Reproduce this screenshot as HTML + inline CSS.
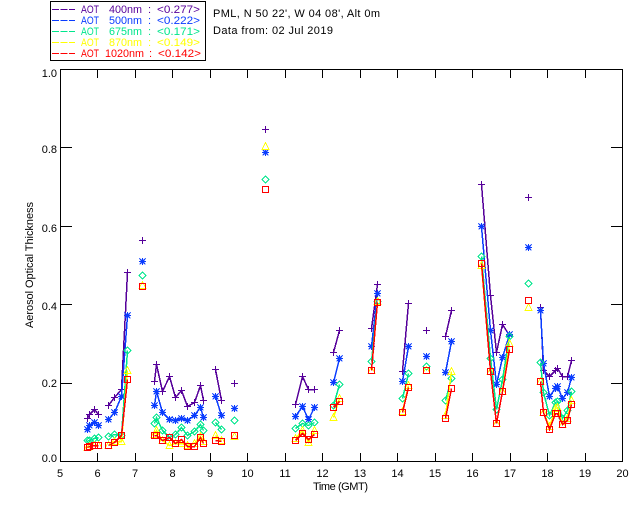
<!DOCTYPE html>
<html><head><meta charset="utf-8"><style>
html,body{margin:0;padding:0;background:#fff;width:640px;height:512px;overflow:hidden}
svg{display:block}
text{font-family:"Liberation Sans",sans-serif;font-size:11px;fill:#000}
.ax{stroke:#000;stroke-width:1.4;fill:none;shape-rendering:crispEdges}
.d polyline{fill:none;stroke-width:1.5;shape-rendering:crispEdges}
.m{fill:none;stroke-width:1;shape-rendering:crispEdges}
.pu polyline{stroke:#56009a;marker:url(#mp)}
.bl polyline{stroke:#0a3cff;marker:url(#mb)}
.gr polyline{stroke:#00e68c;marker:url(#mg)}
.ye polyline{stroke:#ffff00;marker:url(#my)}
.re polyline{stroke:#ff0000;marker:url(#mr)}
</style></head><body>
<svg width="640" height="512" viewBox="0 0 640 512" xmlns="http://www.w3.org/2000/svg">
<defs>
<marker id="mp" markerUnits="userSpaceOnUse" markerWidth="12" markerHeight="12" refX="6" refY="6" overflow="visible"><path class="m" transform="translate(6,6)" stroke="#56009a" d="M-3.5 0H3.5M0-3.5V3.5"/></marker>
<marker id="mb" markerUnits="userSpaceOnUse" markerWidth="12" markerHeight="12" refX="6" refY="6" overflow="visible"><path class="m" transform="translate(6,6)" stroke="#0a3cff" d="M-3.5 0H3.5M0-3.5V3.5M-3-3L3 3M-3 3L3-3M-1.5-1.5H1.5V1.5H-1.5Z"/></marker>
<marker id="mg" markerUnits="userSpaceOnUse" markerWidth="12" markerHeight="12" refX="6" refY="6" overflow="visible"><path class="m" transform="translate(6,6)" stroke="#00e68c" d="M0-3.5L3.5 0L0 3.5L-3.5 0Z"/></marker>
<marker id="my" markerUnits="userSpaceOnUse" markerWidth="12" markerHeight="12" refX="6" refY="6" overflow="visible"><path class="m" transform="translate(6,6)" stroke="#ffff00" d="M0-4L3.5 3H-3.5Z"/></marker>
<marker id="mr" markerUnits="userSpaceOnUse" markerWidth="12" markerHeight="12" refX="6" refY="6" overflow="visible"><path class="m" transform="translate(6,6)" stroke="#ff0000" d="M-3-3H3V3H-3Z"/></marker>
</defs>

<rect x="50.5" y="1.5" width="155" height="59" fill="none" stroke="#000" stroke-width="1" shape-rendering="crispEdges"/>
<g stroke-width="1" shape-rendering="crispEdges" stroke-dasharray="7 1.5">
<path stroke="#56009a" d="M52 9.5H75"/><path stroke="#0a3cff" d="M52 20.5H75"/><path stroke="#00e68c" d="M52 31.5H75"/><path stroke="#ffff00" d="M52 42.5H75"/><path stroke="#ff0000" d="M52 53.5H75"/>
</g>
<g>
<g><text x="81" y="13" style="fill:#56009a" textLength="18" lengthAdjust="spacingAndGlyphs">AOT</text><text x="109" y="13" style="fill:#56009a" textLength="33" lengthAdjust="spacingAndGlyphs">400nm</text><text x="148" y="13" style="fill:#56009a">:</text><text x="157" y="13" style="fill:#56009a" textLength="43" lengthAdjust="spacingAndGlyphs">&lt;0.277&gt;</text></g>
<g><text x="81" y="24" style="fill:#0a3cff" textLength="18" lengthAdjust="spacingAndGlyphs">AOT</text><text x="109" y="24" style="fill:#0a3cff" textLength="33" lengthAdjust="spacingAndGlyphs">500nm</text><text x="148" y="24" style="fill:#0a3cff">:</text><text x="157" y="24" style="fill:#0a3cff" textLength="43" lengthAdjust="spacingAndGlyphs">&lt;0.222&gt;</text></g>
<g><text x="81" y="35" style="fill:#00e68c" textLength="18" lengthAdjust="spacingAndGlyphs">AOT</text><text x="109" y="35" style="fill:#00e68c" textLength="33" lengthAdjust="spacingAndGlyphs">675nm</text><text x="148" y="35" style="fill:#00e68c">:</text><text x="157" y="35" style="fill:#00e68c" textLength="43" lengthAdjust="spacingAndGlyphs">&lt;0.171&gt;</text></g>
<g><text x="81" y="46" style="fill:#ffff00" textLength="18" lengthAdjust="spacingAndGlyphs">AOT</text><text x="109" y="46" style="fill:#ffff00" textLength="33" lengthAdjust="spacingAndGlyphs">870nm</text><text x="148" y="46" style="fill:#ffff00">:</text><text x="157" y="46" style="fill:#ffff00" textLength="43" lengthAdjust="spacingAndGlyphs">&lt;0.149&gt;</text></g>
<g><text x="81" y="57" style="fill:#ff0000" textLength="18" lengthAdjust="spacingAndGlyphs">AOT</text><text x="105" y="57" style="fill:#ff0000" textLength="39" lengthAdjust="spacingAndGlyphs">1020nm</text><text x="149" y="57" style="fill:#ff0000">:</text><text x="158" y="57" style="fill:#ff0000" textLength="43" lengthAdjust="spacingAndGlyphs">&lt;0.142&gt;</text></g>
</g>
<text x="213" y="17" textLength="167" lengthAdjust="spacing">PML, N 50 22', W 04 08', Alt 0m</text>
<text x="213" y="34" textLength="120" lengthAdjust="spacing">Data from: 02 Jul 2019</text>

<path class="ax" d="M60.5 69.5H622.5V461.5H60.5Z"/>
<path d="M97.5 461V453M135.5 461V453M172.5 461V453M210.5 461V453M247.5 461V453M285.5 461V453M322.5 461V453M360.5 461V453M397.5 461V453M435.5 461V453M472.5 461V453M510.5 461V453M547.5 461V453M585.5 461V453M97.5 70V78M135.5 70V78M172.5 70V78M210.5 70V78M247.5 70V78M285.5 70V78M322.5 70V78M360.5 70V78M397.5 70V78M435.5 70V78M472.5 70V78M510.5 70V78M547.5 70V78M585.5 70V78M60 147.5H72M60 226.5H72M60 304.5H72M60 383.5H72M622 147.5H611M622 226.5H611M622 304.5H611M622 383.5H611" stroke="#000" stroke-width="1" fill="none" shape-rendering="crispEdges"/>

<g text-anchor="end">
<text x="57" y="77">1.0</text><text x="57" y="153">0.8</text><text x="57" y="232">0.6</text><text x="57" y="310">0.4</text><text x="57" y="387">0.2</text><text x="57" y="462">0.0</text>
</g>
<g text-anchor="middle">
<text x="60" y="477">5</text><text x="97.5" y="477">6</text><text x="135" y="477">7</text><text x="172.5" y="477">8</text><text x="210" y="477">9</text><text x="247.5" y="477">10</text><text x="285" y="477">11</text><text x="322.5" y="477">12</text><text x="360" y="477">13</text><text x="397.5" y="477">14</text><text x="435" y="477">15</text><text x="472.5" y="477">16</text><text x="510" y="477">17</text><text x="547.5" y="477">18</text><text x="585" y="477">19</text><text x="622.5" y="477">20</text>
</g>
<text x="313" y="490" textLength="55" lengthAdjust="spacing">Time (GMT)</text>
<text transform="translate(33,328) rotate(-90)" textLength="126" lengthAdjust="spacing">Aerosol Optical Thickness</text>

<g class="d" transform="translate(.5,.5)">
<g class="pu">
<polyline points="87,418 89,414 94,409 98,414"/>
<polyline points="108,405 114,397 121,389 127,272"/>
<polyline points="142,240 142,240"/>
<polyline points="154,381 156,364 162,391 169,376 175,397 181,390 187,406 194,402 200,385 203,400"/>
<polyline points="215,369 221,400"/>
<polyline points="234,383 234,383"/>
<polyline points="265,129 265,129"/>
<polyline points="295,404 302,376 308,389 314,389"/>
<polyline points="333,352 339,330"/>
<polyline points="371,328 377,284"/>
<polyline points="402,371 408,303"/>
<polyline points="426,330 426,330"/>
<polyline points="445,336 451,310"/>
<polyline points="481,184 490,295 496,352 502,324 509,335"/>
<polyline points="528,197 528,197"/>
<polyline points="540,307 543,370 549,376 555,370 557,368 562,376 567,376 571,360"/>
</g>
<g class="bl">
<polyline points="87,429 89,425 94,422 98,425"/>
<polyline points="108,419 114,412 121,396 127,315"/>
<polyline points="142,261 142,261"/>
<polyline points="154,405 156,391 162,412 169,419 175,420 181,418 187,420 194,415 200,407 203,417"/>
<polyline points="215,396 221,415"/>
<polyline points="234,408 234,408"/>
<polyline points="265,152 265,152"/>
<polyline points="295,416 302,406 308,419 314,407"/>
<polyline points="333,382 339,358"/>
<polyline points="371,346 377,293"/>
<polyline points="402,381 408,346"/>
<polyline points="426,356 426,356"/>
<polyline points="445,372 451,341"/>
<polyline points="481,226 490,330 496,384 502,357 509,334"/>
<polyline points="528,247 528,247"/>
<polyline points="540,310 543,363 549,396 555,388 557,386 562,398 567,392 571,377"/>
</g>
<g class="gr">
<polyline points="87,440 89,440 94,438 98,437"/>
<polyline points="108,436 114,434 121,435 127,350"/>
<polyline points="142,275 142,275"/>
<polyline points="154,423 156,417 162,430 169,437 175,434 181,427 187,435 194,431 200,424 203,430"/>
<polyline points="215,422 221,429"/>
<polyline points="234,420 234,420"/>
<polyline points="265,179 265,179"/>
<polyline points="295,428 302,423 308,425 314,422"/>
<polyline points="333,405 339,384"/>
<polyline points="371,361 377,301"/>
<polyline points="402,398 408,373"/>
<polyline points="426,366 426,366"/>
<polyline points="445,400 451,378"/>
<polyline points="481,256 490,358 496,409 502,379 509,336"/>
<polyline points="528,283 528,283"/>
<polyline points="540,362 543,392 549,415 555,402 557,401 562,418 567,410 571,391"/>
</g>
<g class="ye">
<polyline points="87,447 89,446 94,445 98,445"/>
<polyline points="108,445 114,441 121,441 127,370"/>
<polyline points="142,285 142,285"/>
<polyline points="154,434 156,430 162,440 169,445 175,443 181,443 187,445 194,443 200,436 203,441"/>
<polyline points="215,435 221,440"/>
<polyline points="234,436 234,436"/>
<polyline points="265,146 265,146"/>
<polyline points="295,438 302,430 308,442 314,430"/>
<polyline points="333,417 339,398"/>
<polyline points="371,370 377,301"/>
<polyline points="402,411 408,385"/>
<polyline points="426,370 426,370"/>
<polyline points="445,415 451,371"/>
<polyline points="481,265 490,371 496,423 502,391 509,343"/>
<polyline points="528,307 528,307"/>
<polyline points="540,381 543,412 549,426 555,408 557,407 562,424 567,418 571,400"/>
</g>
<g class="re">
<polyline points="87,447 89,446 94,445 98,445"/>
<polyline points="108,445 114,442 121,435 127,379"/>
<polyline points="142,286 142,286"/>
<polyline points="154,435 156,435 162,440 169,437 175,443 181,439 187,446 194,446 200,437 203,443"/>
<polyline points="215,440 221,441"/>
<polyline points="234,435 234,435"/>
<polyline points="265,189 265,189"/>
<polyline points="295,440 302,433 308,439 314,434"/>
<polyline points="333,407 339,401"/>
<polyline points="371,370 377,302"/>
<polyline points="402,412 408,387"/>
<polyline points="426,370 426,370"/>
<polyline points="445,418 451,388"/>
<polyline points="481,263 490,371 496,423 502,391 509,349"/>
<polyline points="528,300 528,300"/>
<polyline points="540,381 543,412 549,429 555,413 557,413 562,424 567,420 571,404"/>
</g>
</g>
</svg>
</body></html>
